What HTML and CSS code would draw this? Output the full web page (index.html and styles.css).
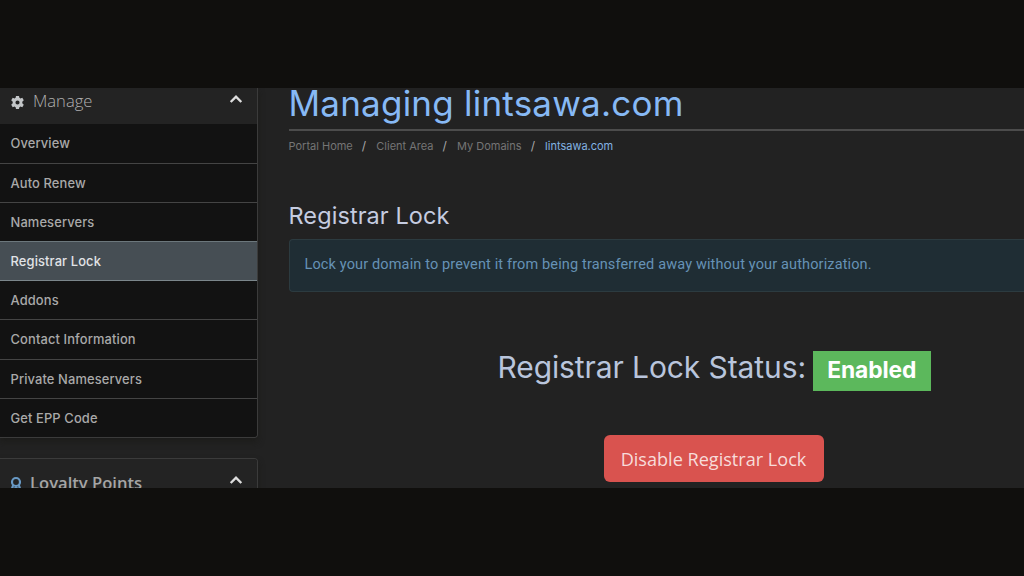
FILE: index.html
```html
<!DOCTYPE html>
<html lang="en">
<head>
    <meta charset="UTF-8">
    <meta name="viewport" content="width=device-width, initial-scale=1.0">
    <title>Managing lintsawa.com</title>
    <link rel="stylesheet" href="styles.css">
</head>
<body>
    <div class="client-area">
        <aside class="sidebar">
            <div class="panel">
                <div class="panel-heading">
                    <svg class="gear" viewBox="0 0 16 16"><path fill-rule="evenodd" d="M6.4 1h3.2l.4 2 1.1.7 2-.7 1.6 2.7-1.6 1.4v1.8l1.6 1.4-1.6 2.7-2-.7-1.1.7-.4 2H6.4L6 13l-1.1-.7-2 .7-1.6-2.7 1.6-1.4V7.1L1.3 5.7 2.9 3l2 .7L6 3zM8 5.8a2.2 2.2 0 1 0 0 4.4 2.2 2.2 0 0 0 0-4.4z"/></svg>
                    <span class="heading-light">Manage</span>
                    <svg class="chevron" viewBox="0 0 14 10"><path d="M1.7 8 7 2.7 12.3 8"/></svg>
                </div>
                <nav class="list-group">
                    <a class="list-item">Overview</a>
                    <a class="list-item">Auto Renew</a>
                    <a class="list-item">Nameservers</a>
                    <a class="list-item active">Registrar Lock</a>
                    <a class="list-item">Addons</a>
                    <a class="list-item">Contact Information</a>
                    <a class="list-item">Private Nameservers</a>
                    <a class="list-item">Get EPP Code</a>
                </nav>
            </div>
            <div class="panel panel-points">
                <div class="panel-heading">
                    <svg class="ribbon" viewBox="0 0 12 18"><circle cx="6" cy="6" r="4"/><path d="M3.2 9 1.5 14 6 11.8 10.5 14 8.8 9"/></svg>
                    <span class="heading-bold">Loyalty Points</span>
                    <svg class="chevron" viewBox="0 0 14 10"><path d="M1.7 8 7 2.7 12.3 8"/></svg>
                </div>
            </div>
        </aside>
        <main class="content">
            <h1>Managing lintsawa.com</h1>
            <div class="breadcrumb">
                <a>Portal Home</a><i>/</i><a>Client Area</a><i>/</i><a>My Domains</a><i>/</i><a class="current">lintsawa.com</a>
            </div>
            <h3>Registrar Lock</h3>
            <div class="alert">Lock your domain to prevent it from being transferred away without your authorization.</div>
            <h2><span class="status-text">Registrar Lock Status:</span><span class="label">Enabled</span></h2>
            <button class="btn-danger">Disable Registrar Lock</button>
        </main>
    </div>
</body>
</html>
```

FILE: styles.css
```css
body {
    margin: 0;
    height: 576px;
    overflow: hidden;
    background-color: #100f0d;
    font-family: Inter, Roboto, "Liberation Sans", sans-serif;
    display: flex;
    flex-direction: column;
    justify-content: center;
}

.client-area {
    height: 400px;
    overflow: hidden;
    display: flex;
    background-color: #222222;
}

.sidebar {
    width: 258px;
    flex-shrink: 0;
}

.panel {
    box-sizing: border-box;
    border: 1px solid #3b3b3b;
    border-left: none;
    border-top: none;
    border-radius: 0 0 4px 0;
    overflow: hidden;
    box-shadow: 0 4px 6px rgba(25, 25, 22, 0.6);
}

.panel-heading {
    display: flex;
    align-items: center;
    box-sizing: border-box;
    height: 36.4px;
    padding: 0 14px 9px 10px;
    background-color: #232323;
    font-family: "Open Sans", "Noto Sans", sans-serif;
    color: #999999;
}

.gear {
    width: 15px;
    height: 15px;
    margin-top: 2px;
    fill: #c3c6c8;
}

.heading-light {
    font-size: 16.6px;
    font-weight: 300;
    margin-left: 8px;
    margin-top: -2px;
    color: #b0b0b0;
}

.chevron {
    width: 14px;
    height: 10px;
    margin-left: auto;
    margin-top: -5px;
    fill: none;
    stroke: #dddddd;
    stroke-width: 2.4;
}

.list-item {
    display: flex;
    align-items: center;
    box-sizing: border-box;
    height: 39.2px;
    padding-left: 10.5px;
    padding-top: 1px;
    border-bottom: 1px solid #444444;
    background-color: #121212;
    color: #a9a9a9;
    font-size: 12.9px;
    font-weight: 500;
    letter-spacing: 0.13px;
}

.list-item:last-child {
    height: 38.6px;
    padding-top: 0;
    border-bottom: none;
}

.list-item.active {
    background-color: #464e54;
    border-bottom-color: #7b868b;
    box-shadow: 0 -1px 0 #6c777c;
    color: #e1e3e6;
}

.panel-points {
    margin-top: 20px;
    border-top: 1px solid #3b3b3b;
    border-radius: 0 4px 0 0;
}

.panel-points .panel-heading {
    height: 50px;
    padding-bottom: 4px;
}

.ribbon {
    width: 12px;
    height: 18px;
    margin-top: 5px;
    fill: none;
    stroke: #6899c4;
    stroke-width: 2.2;
}

.heading-bold {
    font-size: 16.6px;
    font-weight: 600;
    margin-left: 8px;
    color: #a5a5a5;
}

.content {
    flex: 1;
    min-width: 0;
    margin-left: 30.5px;
}

h1, h2, h3 {
    margin: 0;
    font-weight: 400;
    white-space: nowrap;
}

h1 {
    height: 41px;
    border-bottom: 2px solid #4c4c4c;
    font-size: 35px;
    line-height: 31px;
    letter-spacing: 0.22px;
    color: #87b9f5;
}

.breadcrumb {
    display: flex;
    height: 29px;
    align-items: center;
    font-size: 11px;
    color: #757575;
}

.breadcrumb i {
    width: 23.5px;
    text-indent: -1px;
    text-align: center;
    font-style: normal;
    font-size: 12px;
    color: #a8a8a8;
}

.breadcrumb .current {
    color: #83b3e3;
}

h3 {
    margin-top: 40px;
    height: 39px;
    font-size: 23.5px;
    line-height: 32px;
    letter-spacing: 0.08px;
    color: #c5cce0;
}

.alert {
    box-sizing: border-box;
    height: 53px;
    padding-left: 15px;
    border: 1px solid #2c3b40;
    border-right: none;
    border-radius: 4px 0 0 4px;
    background-color: #1f2d34;
    color: #6692b6;
    font-family: Roboto, "Liberation Sans", sans-serif;
    font-size: 14.5px;
    letter-spacing: 0.14px;
    line-height: 50px;
    white-space: nowrap;
}

h2 {
    display: flex;
    margin-top: 59px;
    margin-left: 209px;
    font-size: 30px;
    line-height: 33px;
    letter-spacing: -0.1px;
    color: #b9c5dc;
}

.status-text {
    width: 315.5px;
}

.label {
    box-sizing: border-box;
    width: 117.5px;
    height: 39.5px;
    background-color: #5cb85c;
    color: #ffffff;
    font-size: 22.8px;
    font-weight: 700;
    line-height: 38px;
    text-align: center;
}

.btn-danger {
    display: block;
    width: 220px;
    height: 47px;
    margin: 44.5px 0 0 315px;
    padding: 0;
    border: none;
    border-radius: 6px;
    background-color: #d9534f;
    color: #f7dcda;
    font-family: "Open Sans", "Noto Sans", sans-serif;
    font-size: 18.1px;
    line-height: 46px;
    white-space: nowrap;
}
```
